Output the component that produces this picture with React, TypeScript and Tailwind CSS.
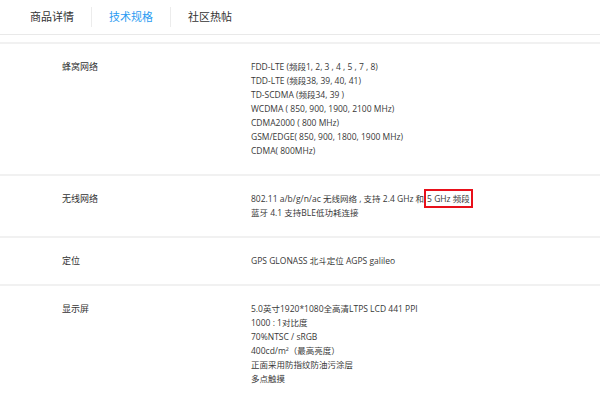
import React from "react";

const tabs = ["商品详情", "技术规格", "社区热帖"];

type Spec = { label: string; lines: React.ReactNode[] };

const specs: Spec[] = [
  {
    label: "蜂窝网络",
    lines: [
      "FDD-LTE (频段1, 2, 3 , 4 , 5 , 7 , 8)",
      "TDD-LTE (频段38, 39, 40, 41)",
      "TD-SCDMA (频段34, 39 )",
      "WCDMA ( 850, 900, 1900, 2100 MHz)",
      "CDMA2000 ( 800 MHz)",
      "GSM/EDGE( 850, 900, 1800, 1900 MHz)",
      "CDMA( 800MHz)",
    ],
  },
  {
    label: "无线网络",
    lines: [
      <>
        802.11 a/b/g/n/ac 无线网络 , 支持 2.4 GHz 和
        <span className="border-2 border-[#e8101a] px-[1px] py-[2px]">
          5 GHz 频段
        </span>
      </>,
      "蓝牙 4.1 支持BLE低功耗连接",
    ],
  },
  {
    label: "定位",
    lines: ["GPS GLONASS 北斗定位 AGPS galileo"],
  },
  {
    label: "显示屏",
    lines: [
      "5.0英寸1920*1080全高清LTPS LCD 441 PPI",
      "1000 : 1对比度",
      "70%NTSC / sRGB",
      "400cd/m²（最高亮度）",
      "正面采用防指纹防油污涂层",
      "多点触摸",
    ],
  },
];

export default function App() {
  return (
    <div className="w-[600px] h-[400px] overflow-hidden bg-white font-['Open_Sans','Noto_Sans_CJK_SC',sans-serif]">
      <div className="h-[35px] flex items-center pl-[13px] border-b border-[#e9e9e9]">
        {tabs.map((tab, i) => (
          <div
            key={tab}
            className={
              "px-[17px] text-[11px] leading-[20px] " +
              (i > 0 ? "border-l border-[#ececec] " : "") +
              (i === 1 ? "text-[#2c9cf2]" : "text-[#333]")
            }
          >
            {tab}
          </div>
        ))}
      </div>

      <div className="mt-[7px] border-t-2 border-[#f1f1f1]">
        {specs.map((spec) => (
          <div
            key={spec.label}
            className="flex pl-[62px] py-[16px] border-b-2 border-[#f1f1f1]"
          >
            <div className="w-[189px] text-[9px] leading-[14px] text-[#333]">
              {spec.label}
            </div>
            <div className="flex flex-col text-[8.5px] leading-[14px] text-[#383838]">
              {spec.lines.map((line, i) => (
                <div key={i}>{line}</div>
              ))}
            </div>
          </div>
        ))}
      </div>
    </div>
  );
}
